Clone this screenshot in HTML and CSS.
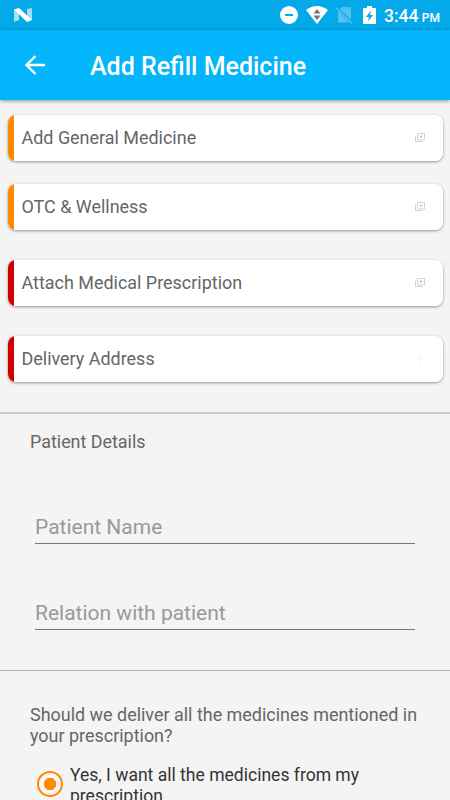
FILE: index.html
```html
<!DOCTYPE html>
<html lang="en">

<head>
    <meta charset="UTF-8">
    <meta name="viewport" content="width=device-width, initial-scale=1.0">
    <title>Add Refill Medicine</title>
    <link rel="stylesheet" href="styles.css">
</head>

<body>
    <div class="status-bar">
        <svg class="logo" width="20" height="16" viewBox="0 0 20 16">
            <path d="M1 3l5-1v11l-5 2z M14 2l5-1v12l-5 1z" fill="#a5def7"/>
            <path d="M1 2.500L6 1l13 12-5 2z" fill="#fff"/>
        </svg>
        <div class="status-icons">
            <svg width="18" height="18" viewBox="0 0 18 18">
                <circle cx="9" cy="9" r="9" fill="#fff"/>
                <path d="M5 9h8" stroke="#03a9e8" stroke-width="2"/>
            </svg>
            <svg class="wifi" width="22" height="18" viewBox="0 0 22 18">
                <path d="M0 4Q11-4 22 4L11 18z" fill="#fff"/>
                <path d="M7.500 7.500L11 3l3.500 4.500z M7.500 9.500h7L11 14z" fill="#757575"/>
            </svg>
            <svg class="sim" width="17" height="18" viewBox="0 0 17 18">
                <path d="M6 1h9v13L4 3z M2 5l11.500 11.500H2z" fill="#52c3ef"/>
                <path d="M.5 2l15.500 15.500" stroke="#52c3ef" stroke-width="1.300"/>
            </svg>
            <svg class="battery" width="13" height="18" viewBox="0 0 13 18">
                <path d="M0 2h4V0h5v2h4v16H0z" fill="#fff"/>
                <path d="M8 4.500L3 11h3l-1 4.500L10 9H7z" fill="#03a9e8"/>
            </svg>
            <span class="time">3:44 <small>PM</small></span>
        </div>
    </div>

    <header>
        <svg width="20" height="20" viewBox="0 0 20 20">
            <path d="M20 10H2M10.500 1L1.500 10l9 9" fill="none" stroke="#fff" stroke-width="2.300"/>
        </svg>
        <h1>Add Refill Medicine</h1>
    </header>

    <div class="cards">
        <div class="card">
            <span>Add General Medicine</span>
            <svg width="10" height="10" viewBox="0 0 10 10">
                <path d="M2.500.5h7v6.500h-7z M.5 2.500v6h7" fill="none" stroke="#d2d2d2"/>
                <path d="M4.500 3.700h3M6 2.200v3" stroke="#f7b68f"/>
            </svg>
        </div>
        <div class="card">
            <span>OTC &amp; Wellness</span>
            <svg width="10" height="10" viewBox="0 0 10 10">
                <path d="M2.500.5h7v6.500h-7z M.5 2.500v6h7" fill="none" stroke="#d2d2d2"/>
                <path d="M4.500 3.700h3M6 2.200v3" stroke="#c4c4c4"/>
            </svg>
        </div>
        <div class="card required">
            <span>Attach Medical Prescription</span>
            <svg width="10" height="10" viewBox="0 0 10 10">
                <path d="M2.500.5h7v6.500h-7z M.5 2.500v6h7" fill="none" stroke="#d2d2d2"/>
                <path d="M4.500 3.700h3M6 2.200v3" stroke="#c4c4c4"/>
            </svg>
        </div>
        <div class="card required">
            <span>Delivery Address</span>
            <svg width="10" height="10" viewBox="0 0 10 10">
                <path d="M3.500 1.500l3.500 3.500-3.500 3.500" fill="none" stroke="#ececec"/>
            </svg>
        </div>
    </div>

    <section class="patient">
        <h2>Patient Details</h2>
        <input type="text" placeholder="Patient Name">
        <input type="text" placeholder="Relation with patient">
    </section>

    <section class="delivery">
        <p>Should we deliver all the medicines mentioned in your prescription?</p>
        <label class="option">
            <span class="radio"></span>
            <span>Yes, I want all the medicines from my prescription</span>
        </label>
    </section>
</body>

</html>
```
FILE: styles.css
```css
* {
    box-sizing: border-box;
}

body {
    margin: 0;
    height: 800px;
    overflow: hidden;
    background-color: #f4f4f4;
    color: #666;
    font-family: Roboto, sans-serif;
    font-size: 17.95px;
}

svg {
    display: block;
    flex-shrink: 0;
}

.status-bar {
    display: flex;
    justify-content: space-between;
    height: 30px;
    padding: 6px 10px 0 13px;
    background-color: #03a9e8;
}

.logo {
    margin-top: 1px;
}

.status-icons {
    display: flex;
}

.wifi {
    margin-left: 8px;
}

.sim {
    margin-left: 8px;
}

.battery {
    margin-left: 10px;
}

.time {
    margin-left: 8px;
    color: white;
    font-size: 17.5px;
    font-weight: 500;
    line-height: 20px;
    white-space: nowrap;
}

.time small {
    font-size: 12px;
    margin-left: -1px;
}

header {
    display: flex;
    align-items: center;
    height: 70px;
    padding: 0 25px;
    background-color: #03b5fa;
    box-shadow: 0 1px 4px rgba(0, 0, 0, 0.4);
}

h1 {
    margin: 3px 0 0 45px;
    color: white;
    font-size: 25px;
    font-weight: 500;
}

.cards {
    height: 314px;
    padding: 15px 7.5px 0;
    border-bottom: 2px solid #cacaca;
}

.card {
    display: flex;
    justify-content: space-between;
    align-items: center;
    height: 46px;
    margin-bottom: 30px;
    padding: 0 17.5px 1px 14px;
    background: linear-gradient(to right, #ff8a00 6px, white 6px);
    border-radius: 8px;
    box-shadow: 0 1px 3px rgba(0, 0, 0, 0.4);
}

.card:first-child {
    margin-bottom: 23px;
}

.card.required {
    background: linear-gradient(to right, #d00000 6px, white 6px);
}

.patient {
    height: 257px;
    padding: 17px 35px 0;
    border-bottom: 1px solid #b8b8b8;
}

h2 {
    margin: 0 0 0 -5px;
    font-size: 17.9px;
    font-weight: 400;
    line-height: 21px;
}

input {
    display: block;
    width: 100%;
    height: 36px;
    margin-top: 50px;
    padding: 2px 0 0;
    background: transparent;
    border: none;
    border-bottom: 1px solid #777;
    font-family: inherit;
    font-size: 21px;
}

h2 + input {
    margin-top: 56px;
}

input::placeholder {
    color: #999;
}

.delivery {
    padding: 33px 30px 0;
}

p {
    margin: 0;
    line-height: 21px;
}

.option {
    display: flex;
    margin: 19px 0 0 7px;
    color: #333;
    font-size: 17.55px;
    line-height: 21px;
}

.radio {
    flex-shrink: 0;
    width: 26px;
    height: 26px;
    margin: 6px 7px 0 0;
    border: 2.5px solid #ff8a00;
    border-radius: 50%;
    background: radial-gradient(circle, #ff8a00 6px, transparent 6.5px);
}
```
